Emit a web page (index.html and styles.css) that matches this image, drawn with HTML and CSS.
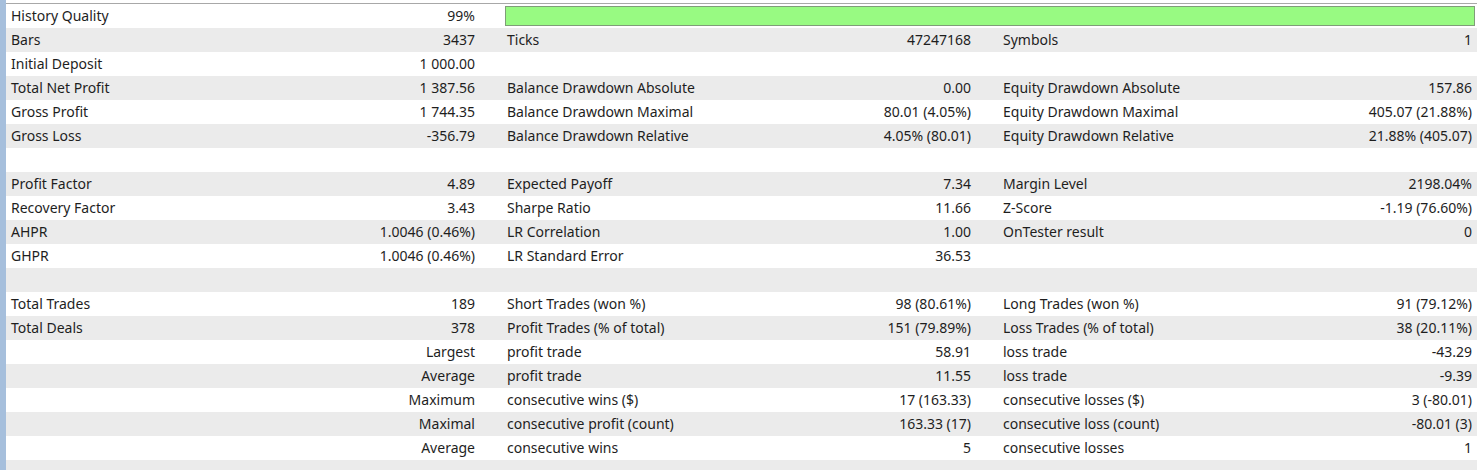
FILE: index.html
```html
<!DOCTYPE html>
<html>
<head>
<meta charset="utf-8">
<link rel="stylesheet" href="styles.css">
</head>
<body>
<div class="page">
  <div class="strip"></div>
  <div class="report">
    <div class="row">
      <div class="g g1"><span>History Quality</span><span>99%</span></div>
      <div class="g gbar"><div class="bar"></div></div>
    </div>
    <div class="row">
      <div class="g g1"><span>Bars</span><span>3437</span></div>
      <div class="g g2"><span>Ticks</span><span>47247168</span></div>
      <div class="g g3"><span>Symbols</span><span>1</span></div>
    </div>
    <div class="row">
      <div class="g g1"><span>Initial Deposit</span><span>1 000.00</span></div>
      <div class="g g2"></div>
      <div class="g g3"></div>
    </div>
    <div class="row">
      <div class="g g1"><span>Total Net Profit</span><span>1 387.56</span></div>
      <div class="g g2"><span>Balance Drawdown Absolute</span><span>0.00</span></div>
      <div class="g g3"><span>Equity Drawdown Absolute</span><span>157.86</span></div>
    </div>
    <div class="row">
      <div class="g g1"><span>Gross Profit</span><span>1 744.35</span></div>
      <div class="g g2"><span>Balance Drawdown Maximal</span><span>80.01 (4.05%)</span></div>
      <div class="g g3"><span>Equity Drawdown Maximal</span><span>405.07 (21.88%)</span></div>
    </div>
    <div class="row">
      <div class="g g1"><span>Gross Loss</span><span>-356.79</span></div>
      <div class="g g2"><span>Balance Drawdown Relative</span><span>4.05% (80.01)</span></div>
      <div class="g g3"><span>Equity Drawdown Relative</span><span>21.88% (405.07)</span></div>
    </div>
    <div class="row"></div>
    <div class="row">
      <div class="g g1"><span>Profit Factor</span><span>4.89</span></div>
      <div class="g g2"><span>Expected Payoff</span><span>7.34</span></div>
      <div class="g g3"><span>Margin Level</span><span>2198.04%</span></div>
    </div>
    <div class="row">
      <div class="g g1"><span>Recovery Factor</span><span>3.43</span></div>
      <div class="g g2"><span>Sharpe Ratio</span><span>11.66</span></div>
      <div class="g g3"><span>Z-Score</span><span>-1.19 (76.60%)</span></div>
    </div>
    <div class="row">
      <div class="g g1"><span>AHPR</span><span>1.0046 (0.46%)</span></div>
      <div class="g g2"><span>LR Correlation</span><span>1.00</span></div>
      <div class="g g3"><span>OnTester result</span><span>0</span></div>
    </div>
    <div class="row">
      <div class="g g1"><span>GHPR</span><span>1.0046 (0.46%)</span></div>
      <div class="g g2"><span>LR Standard Error</span><span>36.53</span></div>
      <div class="g g3"></div>
    </div>
    <div class="row"></div>
    <div class="row">
      <div class="g g1"><span>Total Trades</span><span>189</span></div>
      <div class="g g2"><span>Short Trades (won %)</span><span>98 (80.61%)</span></div>
      <div class="g g3"><span>Long Trades (won %)</span><span>91 (79.12%)</span></div>
    </div>
    <div class="row">
      <div class="g g1"><span>Total Deals</span><span>378</span></div>
      <div class="g g2"><span>Profit Trades (% of total)</span><span>151 (79.89%)</span></div>
      <div class="g g3"><span>Loss Trades (% of total)</span><span>38 (20.11%)</span></div>
    </div>
    <div class="row">
      <div class="g g1"><span></span><span>Largest</span></div>
      <div class="g g2"><span>profit trade</span><span>58.91</span></div>
      <div class="g g3"><span>loss trade</span><span>-43.29</span></div>
    </div>
    <div class="row">
      <div class="g g1"><span></span><span>Average</span></div>
      <div class="g g2"><span>profit trade</span><span>11.55</span></div>
      <div class="g g3"><span>loss trade</span><span>-9.39</span></div>
    </div>
    <div class="row">
      <div class="g g1"><span></span><span>Maximum</span></div>
      <div class="g g2"><span>consecutive wins ($)</span><span>17 (163.33)</span></div>
      <div class="g g3"><span>consecutive losses ($)</span><span>3 (-80.01)</span></div>
    </div>
    <div class="row">
      <div class="g g1"><span></span><span>Maximal</span></div>
      <div class="g g2"><span>consecutive profit (count)</span><span>163.33 (17)</span></div>
      <div class="g g3"><span>consecutive loss (count)</span><span>-80.01 (3)</span></div>
    </div>
    <div class="row">
      <div class="g g1"><span></span><span>Average</span></div>
      <div class="g g2"><span>consecutive wins</span><span>5</span></div>
      <div class="g g3"><span>consecutive losses</span><span>1</span></div>
    </div>
    <div class="row"></div>
  </div>
</div>
</body>
</html>
```

FILE: styles.css
```css
html, body {
  margin: 0;
  padding: 0;
  background: #ffffff;
  overflow: hidden;
}
.page {
  display: flex;
  width: 1477px;
  height: 470px;
  overflow: hidden;
  font-family: "Noto Sans", "Open Sans", sans-serif;
  font-size: 14px;
  color: #1e1e1e;
}
.strip {
  width: 6px;
  flex: none;
  background: #a6bfdc;
}
.report {
  flex: 1;
  padding-top: 3px;
  background: #ffffff;
}
.report::before {
  content: "";
  display: block;
  height: 1px;
  background: #a8a8a8;
}
.row {
  display: flex;
  height: 24px;
  align-items: center;
}
.row:nth-child(even) {
  background: #ebebeb;
}
.g {
  display: flex;
  justify-content: space-between;
  align-items: center;
  height: 24px;
  box-sizing: border-box;
  white-space: nowrap;
  padding-bottom: 1px;
}
.g1, .g2 {
  width: 496px;
  padding-left: 5px;
  padding-right: 27px;
}
.g3 {
  flex: 1;
  padding-left: 5px;
  padding-right: 5px;
}
.gbar {
  flex: 1;
  padding: 2px 2px 2px 3px;
}
.bar {
  width: 100%;
  height: 100%;
  box-sizing: border-box;
  background: #98fa82;
  border: 1px solid #7f9d78;
}
```
